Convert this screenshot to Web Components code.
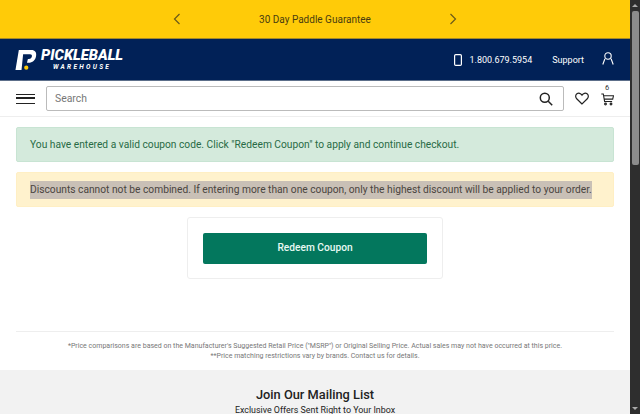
<!DOCTYPE html>
<html>
<head>
<meta charset="utf-8">
<title>Redeem Coupon</title>
<style>
  html, body { margin: 0; padding: 0; height: 414px; overflow: hidden; background: #fff; }
  body { font-family: Roboto, "Liberation Sans", sans-serif; }
  .page { display: flex; height: 414px; }
  .content { flex: 1; min-width: 0; overflow: hidden; }
</style>
</head>
<body>
<div class="page">
  <div class="content">
    <promo-bar>30 Day Paddle Guarantee</promo-bar>
    <site-header></site-header>
    <search-bar></search-bar>
    <main-area>
      <alert-box kind="success">You have entered a valid coupon code. Click "Redeem Coupon" to apply and continue checkout.</alert-box>
      <alert-box kind="warning"><mark-text>Discounts cannot not be combined. If entering more than one coupon, only the highest discount will be applied to your order.</mark-text></alert-box>
      <redeem-card>Redeem Coupon</redeem-card>
    </main-area>
    <price-note></price-note>
    <mailing-list></mailing-list>
  </div>
  <fake-scrollbar></fake-scrollbar>
</div>

<script>
class PromoBar extends HTMLElement {
  constructor() {
    super();
    this.attachShadow({ mode: 'open' }).innerHTML = `
    <style>
      :host { display: flex; height: 38px; background: #ffcb08; border-bottom: 1px solid #a58a2a; align-items: center; justify-content: center; color: #4a3d10; font-size: 10px; }
      .label { width: 238px; text-align: center; }
      svg { width: 10px; height: 14px; fill: none; stroke: #6b5a1a; stroke-width: 1.2; display: block; }
      .wrap { display: flex; align-items: center; gap: 14px; }
    </style>
    <div class="wrap">
      <svg viewBox="0 0 10 14"><path d="M7.5 2 2.5 7l5 5"/></svg>
      <div class="label"><slot></slot></div>
      <svg viewBox="0 0 10 14"><path d="M2.5 2 7.500 7l-5 5"/></svg>
    </div>`;
  }
}

class SiteHeader extends HTMLElement {
  constructor() {
    super();
    this.attachShadow({ mode: 'open' }).innerHTML = `
    <style>
      :host { display: flex; height: 41px; background: #012157; border-bottom: 1px solid #5d6f8a; align-items: center; padding: 0 16px 0 15px; color: #fff; font-size: 9px; }
      .logo { display: flex; align-items: center; gap: 4px; }
      .logo svg { width: 22px; height: 22px; display: block; }
      .name { display: flex; flex-direction: column; align-items: center; font-family: Roboto, sans-serif; font-style: italic; font-weight: 900; line-height: 1; }
      .big { font-size: 14.700px; line-height: 12px; }
      .small { font-size: 6.500px; line-height: 7px; letter-spacing: 2.300px; font-weight: 700; margin-top: 3px; }
      .right { margin-left: auto; display: flex; align-items: center; }
      .phone { display: flex; align-items: center; gap: 7px; }
      .phone svg { width: 8px; height: 12px; display: block; fill: none; stroke: #fff; stroke-width: 1.2; }
      .support { margin-left: 20px; }
      .user { margin-left: 18px; width: 12px; height: 13px; fill: none; stroke: #fff; stroke-width: 1.1; display: block; margin-top: -3px; }
    </style>
    <div class="logo">
      <svg viewBox="0 0 23 22">
        <path fill="#fff" d="M4 0.500h13c4 0 5.800 2.500 5 6.500-.8 4-3.500 6.800-8 6.800h-1.500l1-3.800h1c1.800 0 3-1.200 3.200-2.800.2-1.400-.5-2.200-2-2.200H8.500L6.800 21.500H0.500z"/>
        <circle cx="11.800" cy="19" r="2.200" fill="#ffcb08"/>
      </svg>
      <div class="name"><span class="big">PICKLEBALL</span><span class="small">WAREHOUSE</span></div>
    </div>
    <div class="right">
      <div class="phone">
        <svg viewBox="0 0 8 12"><rect x=".6" y=".6" width="6.800" height="10.800" rx="1.200"/></svg>
        <span>1.800.679.5954</span>
      </div>
      <span class="support">Support</span>
      <svg class="user" viewBox="0 0 12 13"><circle cx="6" cy="4" r="3.200"/><path d="M.8 12.500 2.900 6.800M11.200 12.500 9.100 6.800"/></svg>
    </div>`;
  }
}

class SearchBar extends HTMLElement {
  constructor() {
    super();
    this.attachShadow({ mode: 'open' }).innerHTML = `
    <style>
      :host { display: flex; height: 35px; background: #fff; border-bottom: 1px solid #eee; align-items: center; padding: 0 16px 0 16px; font-size: 10.400px; color: #777; }
      .burger { width: 19px; height: 10px; border-top: 1.500px solid #222; border-bottom: 1.500px solid #222; box-sizing: border-box; }
      .burger i { display: block; height: 1.500px; background: #222; margin-top: 2.800px; }
      .box { margin-left: 11px; flex: 1; height: 25px; box-sizing: border-box; border: 1px solid #bbb; border-radius: 2px; display: flex; align-items: center; padding: 0 10px 0 8px; }
      .box span { flex: 1; }
      .box svg { width: 14px; height: 14px; fill: none; stroke: #222; stroke-width: 1.500; display: block; }
      .heart { margin-left: 11px; width: 14px; height: 13px; fill: none; stroke: #222; stroke-width: 1.200; display: block; }
      .cart { margin-left: 12px; position: relative; width: 13px; height: 13px; margin-top: 2px; }
      .cart svg { width: 13px; height: 13px; fill: none; stroke: #222; stroke-width: 1.100; display: block; }
      .cart b { position: absolute; left: 4px; top: -9px; font-weight: 400; font-size: 7.500px; line-height: 8px; color: #333; }
    </style>
    <div class="burger"><i></i></div>
    <div class="box">
      <span>Search</span>
      <svg viewBox="0 0 14 14"><circle cx="5.800" cy="5.800" r="4.500"/><path d="m9.200 9.200 4 4"/></svg>
    </div>
    <svg class="heart" viewBox="0 0 14 13"><path d="M7 12 1.700 6.800C.2 5.200.4 2.900 1.900 1.800c1.600-1.100 3.800-.6 5.100 1.300C8.300 1.200 10.500.7 12.100 1.800c1.500 1.100 1.700 3.400.2 5z"/></svg>
    <div class="cart">
      <b>6</b>
      <svg viewBox="0 0 13 13"><path d="M.3 1h2l1.300 7.500h7.500M2.700 2.800h9.800l-.8 3.300H3.200"/><circle cx="4.500" cy="11" r=".9"/><circle cx="10" cy="11" r=".9"/></svg>
    </div>`;
  }
}

class MainArea extends HTMLElement {
  constructor() {
    super();
    this.attachShadow({ mode: 'open' }).innerHTML = `
    <style>
      :host { display: flex; flex-direction: column; padding: 10px 16px 0 16px; gap: 10px; height: 204px; box-sizing: border-box; }
    </style>
    <slot></slot>`;
  }
}

class AlertBox extends HTMLElement {
  constructor() {
    super();
    this.attachShadow({ mode: 'open' }).innerHTML = `
    <style>
      :host { display: flex; align-items: center; height: 35px; box-sizing: border-box; border-radius: 2px; padding: 0 13px; font-size: 10.220px; }
      :host([kind="success"]) { background: #d4eadc; color: #286a45; border: 1px solid #c8e4d3; }
      :host([kind="warning"]) { background: #fff2cd; color: #55493a; border: 1px solid #ffefc4; }
    </style>
    <span><slot></slot></span>`;
  }
}

class MarkText extends HTMLElement {
  constructor() {
    super();
    this.attachShadow({ mode: 'open' }).innerHTML = `
    <style>
      :host { display: inline-block; background: #c9c0b6; color: #4a4540; line-height: 18px; white-space: nowrap; }
    </style>
    <slot></slot>`;
  }
}

class RedeemCard extends HTMLElement {
  constructor() {
    super();
    this.attachShadow({ mode: 'open' }).innerHTML = `
    <style>
      :host { display: block; align-self: center; width: 256px; height: 62px; box-sizing: border-box; border: 1px solid #eee; border-radius: 3px; padding: 15px; background: #fff; }
      button { display: block; width: 100%; height: 31px; border: 0; border-radius: 2px; background: #03775d; color: #e8faf3; font: 500 10.200px Roboto, sans-serif; padding: 0 0 2px; }
    </style>
    <button><slot></slot></button>`;
  }
}

class PriceNote extends HTMLElement {
  constructor() {
    super();
    this.attachShadow({ mode: 'open' }).innerHTML = `
    <style>
      :host { display: block; box-sizing: border-box; margin: 10px 16px 0; border-top: 1px solid #eee; padding-top: 9px; height: 39px; text-align: center; color: #777; font-size: 7.030px; line-height: 10px; }
    </style>
    <div>*Price comparisons are based on the Manufacturer's Suggested Retail Price ("MSRP") or Original Selling Price. Actual sales may not have occurred at this price.</div>
    <div>**Price matching restrictions vary by brands. Contact us for details.</div>`;
  }
}

class MailingList extends HTMLElement {
  constructor() {
    super();
    this.attachShadow({ mode: 'open' }).innerHTML = `
    <style>
      :host { display: block; background: #f2f2f2; height: 44px; padding-top: 16px; box-sizing: border-box; text-align: center; color: #222; overflow: hidden; }
      h2 { margin: 0; font: 500 12.800px/18px Roboto, sans-serif; }
      p { margin: 0; font: 400 8.900px/12px Roboto, sans-serif; }
    </style>
    <h2>Join Our Mailing List</h2>
    <p>Exclusive Offers Sent Right to Your Inbox</p>`;
  }
}

class FakeScrollbar extends HTMLElement {
  constructor() {
    super();
    this.attachShadow({ mode: 'open' }).innerHTML = `
    <style>
      :host { display: flex; flex-direction: column; align-items: center; width: 10px; height: 414px; background: #2e2e2e; box-sizing: border-box; }
      .up, .down { width: 0; height: 0; border-left: 3px solid transparent; border-right: 3px solid transparent; }
      .up { border-bottom: 3px solid #aaa; margin-top: 4px; }
      .thumb { width: 7px; height: 154px; background: #8c8c8c; border-radius: 2px; margin-top: 4px; }
      .down { border-top: 3px solid #aaa; margin-top: auto; margin-bottom: 4px; }
    </style>
    <div class="up"></div>
    <div class="thumb"></div>
    <div class="down"></div>`;
  }
}

customElements.define('promo-bar', PromoBar);
customElements.define('site-header', SiteHeader);
customElements.define('search-bar', SearchBar);
customElements.define('main-area', MainArea);
customElements.define('alert-box', AlertBox);
customElements.define('mark-text', MarkText);
customElements.define('redeem-card', RedeemCard);
customElements.define('price-note', PriceNote);
customElements.define('mailing-list', MailingList);
customElements.define('fake-scrollbar', FakeScrollbar);
</script>
</body>
</html>
